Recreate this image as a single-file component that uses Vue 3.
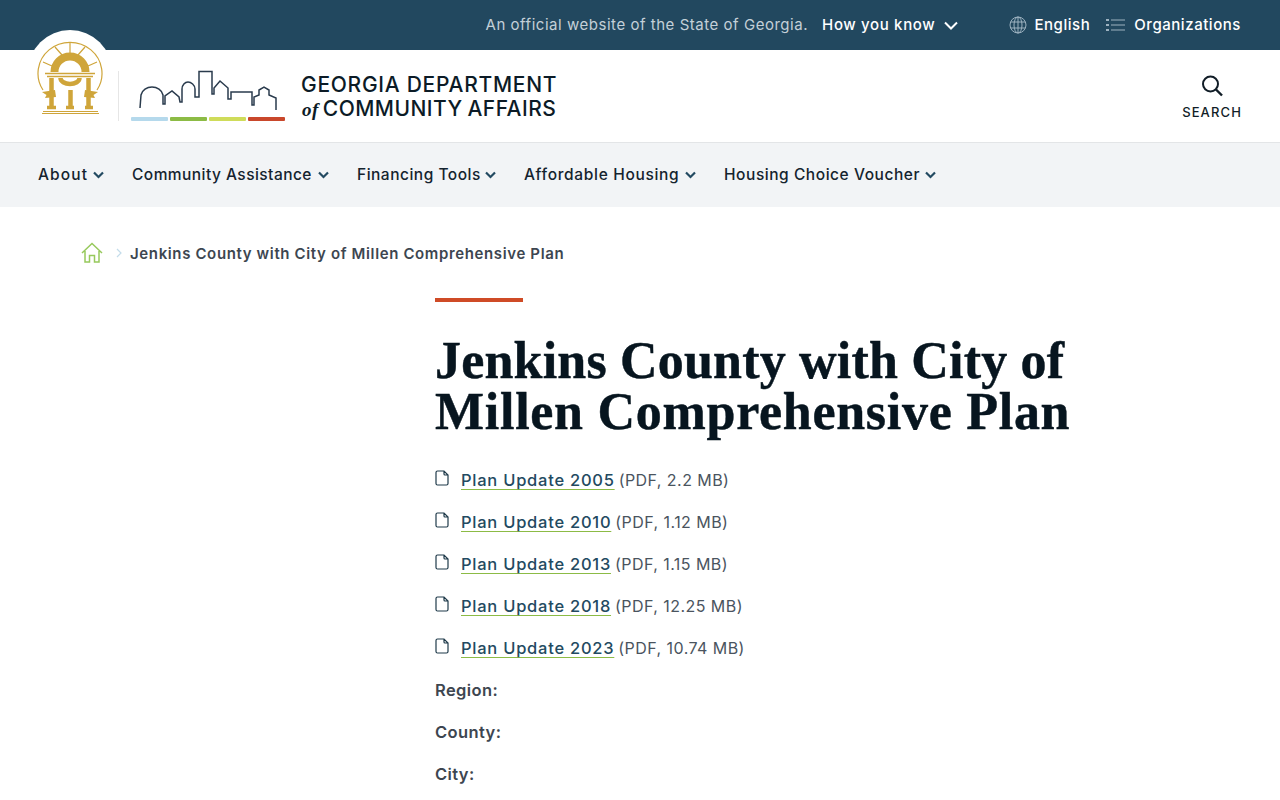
<script setup>
const nav = [
  { label: 'About', width: 50, spacing: 1.1 },
  { label: 'Community Assistance', width: 181, spacing: 0.45 },
  { label: 'Financing Tools', width: 123, spacing: 0.5 },
  { label: 'Affordable Housing', width: 156, spacing: 0.67 },
  { label: 'Housing Choice Voucher', width: 196, spacing: 0.55 }
]
const plans = [
  { name: 'Plan Update 2005', meta: '(PDF, 2.2 MB)' },
  { name: 'Plan Update 2010', meta: '(PDF, 1.12 MB)' },
  { name: 'Plan Update 2013', meta: '(PDF, 1.15 MB)' },
  { name: 'Plan Update 2018', meta: '(PDF, 12.25 MB)' },
  { name: 'Plan Update 2023', meta: '(PDF, 10.74 MB)' }
]
const fields = ['Region:', 'County:', 'City:']
</script>

<template>
  <div class="page">
    <div class="topbar">
      <span class="official">An official website of the State of Georgia.</span>
      <a class="how">How you know
        <svg width="14" height="9" viewBox="0 0 14 9"><path d="M1 1.500l6 6 6-6" fill="none" stroke="#fff" stroke-width="2"/></svg>
      </a>
      <a class="tool lang">
        <svg width="18" height="18" viewBox="0 0 18 18" fill="none" stroke="#9db2c0" stroke-width="1"><circle cx="9" cy="9" r="8"/><ellipse cx="9" cy="9" rx="4" ry="8"/><path d="M9 1v16M1.800 6h14.400M1.800 12h14.400"/></svg>
        English
      </a>
      <a class="tool orgs">
        <svg width="19" height="14" viewBox="0 0 19 14" fill="none" stroke="#9db2c0" stroke-width="1"><path d="M5 2h14M5 7h14M5 12h14"/><path d="M0 2h3M0 7h3M0 12h3" stroke-width="2"/></svg>
        Organizations
      </a>
    </div>

    <header class="masthead">
      <div class="seal-disc"></div>
      <svg class="seal" width="66" height="76" viewBox="37 41 66 76" fill="none" stroke="#cfa53a">
        <path d="M43 90A32 31 0 1 1 97 90" stroke-width="1.200"/>
        <path d="M70 43v10M55 47l7 8M85 47l-7 8M43 62l9 4M97 62l-9 4" stroke-width="1.200"/>
        <path d="M54.500 72a15.500 15.500 0 0 1 31 0" stroke-width="8"/>
        <path d="M45 73.500h50M47 76.500h46" stroke-width="1.500"/>
        <path d="M60.500 78a9.500 6 0 0 0 19 0" stroke-width="4.500"/>
        <path d="M51.500 78v28M70.500 90v16M88.500 78v28" stroke-width="4.500"/>
        <path d="M42 92l13-2 1 7-11 1 1.500-3zM98 92l-13-2-1 7 11 1-1.500-3z" fill="#cfa53a" stroke="none"/>
        <path d="M47 107.500h9M66 107.500h8M85 107.500h8" stroke-width="3.500"/>
        <path d="M43 111.500h55M42 113.500h57" stroke-width="1"/>
      </svg>
      <div class="rule"></div>
      <div class="skyline">
        <svg width="154" height="52" viewBox="131 70 154 52" fill="none">
          <path d="M140 108l1-13C142 90 147 87 152 87s10 3 11 8v9h2v-8l7-5 7 6 1 5h2V89c0-4 3-7 6-7s7 3 7 7v8h4V71.500h13V94h2v-6l6-7 8 7v11h3v-7h21v13h2v-8l5-2v-5l5-3 5 3v5l7 3v12" stroke="#2a3b4d" stroke-width="1.500"/>
          <rect x="131" y="117" width="37" height="4" rx="1" fill="#b5d9ec"/>
          <rect x="170" y="117" width="37" height="4" rx="1" fill="#8cbb45"/>
          <rect x="209" y="117" width="37" height="4" rx="1" fill="#cfdc5a"/>
          <rect x="248" y="117" width="37" height="4" rx="1" fill="#c9472b"/>
        </svg>
      </div>
      <div class="wordmark">
        <div class="line-one">GEORGIA DEPARTMENT</div>
        <div class="line-two"><em>of</em> COMMUNITY AFFAIRS</div>
      </div>
      <div class="search">
        <svg width="24" height="24" viewBox="0 0 24 24" fill="none" stroke="#111d27" stroke-width="2"><circle cx="10.500" cy="10" r="7.500"/><path d="M16 15.500l6 6" stroke-width="2.400"/></svg>
        <span>SEARCH</span>
      </div>
    </header>

    <nav class="mainnav">
      <a v-for="item in nav" :key="item.label" class="navitem">
        <span :style="{ width: item.width + 'px', letterSpacing: item.spacing + 'px' }">{{ item.label }}</span>
        <svg width="11" height="8" viewBox="0 0 11 8"><path d="M1 1.500l4.500 4.500L10 1.500" fill="none" stroke="#234a61" stroke-width="2.200"/></svg>
      </a>
    </nav>

    <div class="crumbs">
      <svg class="home" width="22" height="21" viewBox="0 0 22 21" fill="none" stroke="#97c95c" stroke-width="1.500"><path d="M1 11l10-9.500L21 11M4 9v11h4.500v-6.500h5V20H18V9"/></svg>
      <svg class="sep" width="6" height="10" viewBox="0 0 6 10" fill="none" stroke="#c3dcea" stroke-width="1.200"><path d="M1 1l4 4-4 4"/></svg>
      <span>Jenkins County with City of Millen Comprehensive Plan</span>
    </div>

    <main class="content">
      <div class="accent"></div>
      <h1><span class="h-one">Jenkins County with City of</span> <span class="h-two">Millen Comprehensive Plan</span></h1>
      <ul class="plans">
        <li v-for="p in plans" :key="p.name">
          <svg width="14" height="16" viewBox="0 0 14 16" fill="none" stroke="#1f3a4a" stroke-width="1.200"><path d="M2.500 1H9l4 4v8.500a1.500 1.500 0 0 1-1.500 1.500h-9A1.500 1.500 0 0 1 1 13.500v-11A1.500 1.500 0 0 1 2.500 1zM9 1v3a1 1 0 0 0 1 1h3"/></svg>
          <a>{{ p.name }}</a><span>{{ p.meta }}</span>
        </li>
      </ul>
      <p v-for="f in fields" :key="f" class="field">{{ f }}</p>
    </main>
  </div>
</template>

<style>
html, body { margin: 0; overflow: hidden; background: #fff; }
</style>

<style scoped>
.page { height: 800px; overflow: hidden; font-family: Inter, "Open Sans", sans-serif; color: #3d4650; position: relative; }
.topbar { height: 50px; box-sizing: border-box; padding: 0 39px 2px 0; background: #22485f; display: flex; align-items: center; justify-content: flex-end; font-size: 15px; font-weight: 500; color: #fff; }
.official { color: #c4d0d8; font-weight: 400; letter-spacing: .53px; margin-right: 14px; }
.how { display: flex; align-items: center; gap: 9px; letter-spacing: .65px; margin-right: 51px; }
.how svg, .tool svg { margin-top: 2px; }
.tool { display: flex; align-items: center; letter-spacing: .55px; }
.lang { gap: 7px; margin-right: 16px; }
.orgs { gap: 9px; }
.masthead { height: 93px; box-sizing: border-box; border-bottom: 1px solid #e3e5e7; display: flex; align-items: flex-start; position: relative; padding-left: 118px; }
.seal-disc { position: absolute; left: 28px; top: -20px; width: 84px; height: 84px; border-radius: 50%; background: #fff; }
.seal { position: absolute; left: 37px; top: -9px; }
.rule { width: 1px; height: 50px; background: #e6e6e6; margin-top: 21px; }
.skyline { margin: 20px 16px 0 12px; height: 52px; }
.wordmark { margin-top: 23px; font-size: 21px; line-height: 24px; font-weight: 500; color: #0c1b26; white-space: nowrap; }
.line-one { letter-spacing: .72px; }
.line-two { letter-spacing: .45px; word-spacing: -1px; }
.wordmark em { font-family: "Liberation Serif", serif; font-size: 19px; font-weight: 700; margin-left: 1px; margin-right: -1px; }
.search { margin-left: auto; margin-right: 38px; margin-top: 24px; display: flex; flex-direction: column; align-items: center; font-size: 13px; font-weight: 500; letter-spacing: 1.130px; color: #111d27; gap: 6px; }
.mainnav { height: 64px; box-sizing: border-box; padding: 0 0 2px 38px; background: #f2f4f6; display: flex; align-items: center; gap: 28px; font-size: 15.500px; font-weight: 500; color: #14232e; }
.navitem { display: flex; align-items: center; gap: 5px; white-space: nowrap; }
.navitem svg { margin-top: 2px; }
.crumbs { display: flex; align-items: center; height: 22px; margin: 35px 0 0 81px; font-size: 15px; font-weight: 600; letter-spacing: .63px; color: #3d4650; }
.home { margin-top: -2px; }
.sep { margin: 0 8px 0 13px; }
.content { margin-left: 435px; width: 680px; padding-top: 34px; }
.accent { width: 88px; height: 4px; background: #cf4b26; }
h1 { margin: 33px 0 0; font-family: "Liberation Serif", serif; font-weight: 700; font-size: 52px; line-height: 51px; -webkit-text-stroke: .45px #07151f; color: #07151f; }
.h-one { display: block; letter-spacing: .19px; }
.h-two { display: block; letter-spacing: .72px; }
.plans { list-style: none; margin: 22px 0 0; padding: 0; }
.plans li { height: 42px; display: flex; align-items: center; font-size: 16px; white-space: pre; }
.plans svg { margin-right: 12px; margin-top: -4px; }
.plans a { color: #234a61; font-size: 16.500px; font-weight: 450; letter-spacing: .75px; text-decoration: underline; text-decoration-color: #8cbb45; text-decoration-thickness: 1px; text-underline-offset: 3px; }
.plans span { margin-left: 4px; letter-spacing: .45px; color: #4a545e; }
.field { margin: 0; height: 42px; line-height: 42px; font-size: 16.500px; font-weight: 600; letter-spacing: .4px; color: #3d4650; }
</style>
